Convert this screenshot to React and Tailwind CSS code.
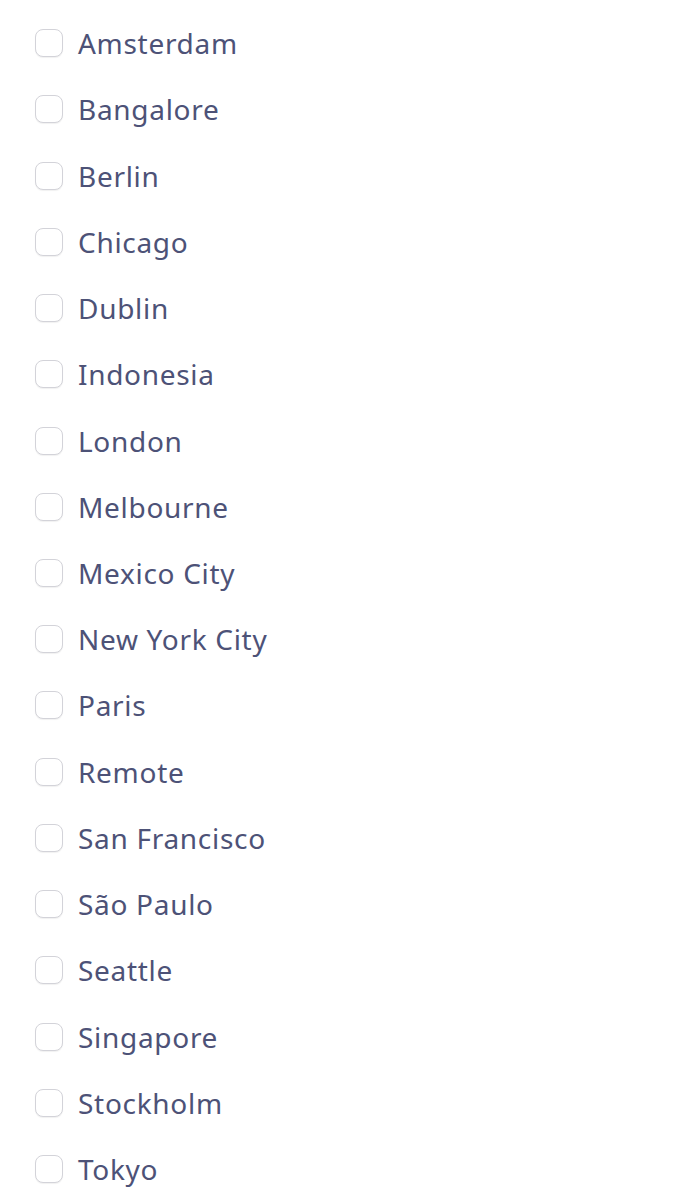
import React from 'react';

const cities = [
  'Amsterdam', 'Bangalore', 'Berlin', 'Chicago', 'Dublin', 'Indonesia', 'London',
  'Melbourne', 'Mexico City', 'New York City', 'Paris', 'Remote', 'San Francisco',
  'São Paulo', 'Seattle', 'Singapore', 'Stockholm', 'Tokyo',
];

export default function App() {
  return (
    <div className="bg-white min-h-[1200px] pt-[10px] pl-[35px]" style={{ fontFamily: '"Noto Sans", sans-serif' }}>
      {cities.map(city => (
        <label key={city} className="flex items-center h-[66.24px] gap-[15px] cursor-pointer">
          <span className="w-[28px] h-[28px] shrink-0 rounded-[8px] border-[1.5px] border-[#d3d3d9] bg-white shadow-[0_1px_1px_rgba(0,0,0,0.06)]" />
          <span className="text-[28px] text-[#4d5277] leading-none tracking-[0.7px]">{city}</span>
        </label>
      ))}
    </div>
  );
}
